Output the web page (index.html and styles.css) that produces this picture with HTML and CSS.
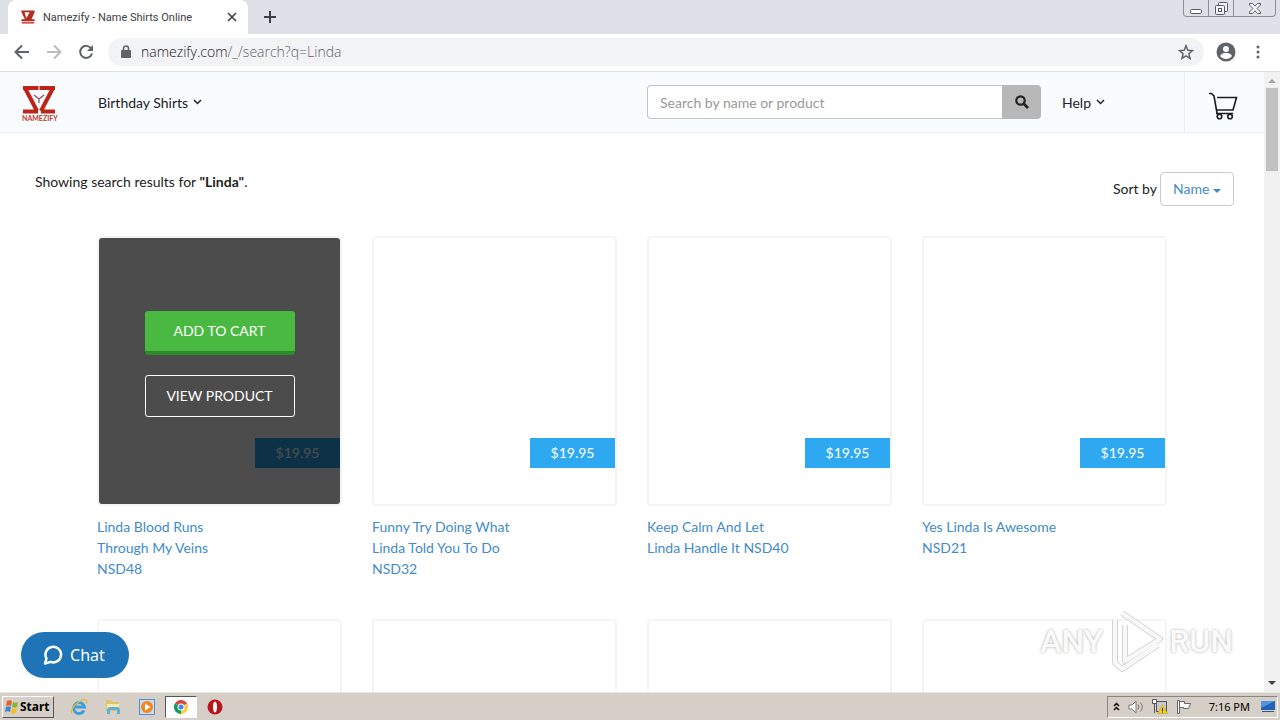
FILE: index.html
```html
<!DOCTYPE html>
<html lang="en">
<head>
  <meta charset="UTF-8">
  <meta name="viewport" content="width=device-width, initial-scale=1.0">
  <title>Namezify - Name Shirts Online</title>
  <link rel="stylesheet" href="styles.css">
</head>
<body>
  <div class="tab-bar">
    <div class="tab">
      <svg class="favicon" viewBox="0 0 36 36" width="14" height="14">
        <path d="M1 1h34v5L27 24h8v5H1v-5h9L1 5z" fill="#b92a1f"/>
        <path d="M9 6h13l-8 15z" fill="#fff"/>
        <path d="M2 33h32" stroke="#d0453a" stroke-width="4"/>
      </svg>
      <span class="tab-title">Namezify - Name Shirts Online</span>
      <button class="icon-btn" aria-label="Close tab">
        <svg width="10" height="10" viewBox="0 0 10 10"><path d="M1 1l8 8M9 1L1 9" stroke="#3c4043" stroke-width="1.600"/></svg>
      </button>
    </div>
    <button class="icon-btn new-tab" aria-label="New tab">
      <svg width="12" height="12" viewBox="0 0 12 12"><path d="M6 0v12M0 6h12" stroke="#3c4043" stroke-width="2"/></svg>
    </button>
    <div class="window-controls">
      <button aria-label="Minimize">
        <svg width="12" height="12" viewBox="0 0 12 12"><rect x=".5" y="7.500" width="11" height="4" rx="1" fill="#fff" stroke="#555b66"/></svg>
      </button>
      <button aria-label="Restore">
        <svg width="13" height="13" viewBox="0 0 13 13" fill="#f4f5f7" stroke="#555b66"><rect x="3.500" y=".5" width="9" height="9" rx="1"/><rect x=".5" y="3.500" width="9" height="9" rx="1"/><rect x="3.500" y="6.500" width="3" height="3"/></svg>
      </button>
      <button class="close" aria-label="Close">
        <svg width="12" height="11" viewBox="0 0 12 11"><path d="M.5.5h3L6 3.200 8.500.5h3v1.500L8 5.500l3.500 3.500v1.500h-3L6 7.800 3.500 10.500h-3V9L4 5.500.5 2z" fill="#fff" stroke="#555b66"/></svg>
      </button>
    </div>
  </div>

  <div class="toolbar">
    <button class="icon-btn" aria-label="Back">
      <svg width="16" height="16" viewBox="0 0 16 16" fill="none" stroke="#5f6368" stroke-width="2"><path d="M15 8H2M8 1.500L1.500 8 8 14.500"/></svg>
    </button>
    <button class="icon-btn" aria-label="Forward">
      <svg width="16" height="16" viewBox="0 0 16 16" fill="none" stroke="#babcbe" stroke-width="2"><path d="M1 8h13M8 1.500L14.500 8 8 14.500"/></svg>
    </button>
    <button class="icon-btn" aria-label="Reload">
      <svg width="16" height="16" viewBox="0 0 16 16"><path d="M13.200 4.500A6 6 0 1 0 14 9.500" fill="none" stroke="#5f6368" stroke-width="2"/><path d="M15 1v6H9z" fill="#5f6368"/></svg>
    </button>
    <div class="address">
      <svg width="10" height="13" viewBox="0 0 10 13"><path d="M2.500 5V3.500a2.500 2.500 0 0 1 5 0V5" fill="none" stroke="#5f6368" stroke-width="1.500"/><rect y="5" width="10" height="8" rx="1" fill="#5f6368"/></svg>
      <span class="url"><b>namezify.com</b>/_/search?q=Linda</span>
      <button class="icon-btn" aria-label="Bookmark">
        <svg width="16" height="16" viewBox="0 0 16 16"><path d="M8 1.800l1.800 4.400 4.700.4-3.600 3.100 1.100 4.600L8 11.800l-4 2.500 1.100-4.600L1.500 6.600l4.700-.4z" fill="none" stroke="#5f6368" stroke-width="1.500"/></svg>
      </button>
    </div>
    <button class="icon-btn profile" aria-label="Profile">
      <svg width="20" height="20" viewBox="0 0 20 20"><circle cx="10" cy="10" r="9.500" fill="#5f6368"/><circle cx="10" cy="7" r="3" fill="#fff"/><path d="M4 14c1-2.500 4-3 6-3s5 .5 6 3c-1.500 2-3.500 3-6 3s-4.500-1-6-3z" fill="#fff"/></svg>
    </button>
    <button class="icon-btn menu" aria-label="Menu">
      <svg width="4" height="14" viewBox="0 0 4 14" fill="#5f6368"><circle cx="2" cy="2" r="1.500"/><circle cx="2" cy="7" r="1.500"/><circle cx="2" cy="12" r="1.500"/></svg>
    </button>
  </div>

  <div class="viewport">
    <div class="page">
      <header class="site-header">
        <a class="logo" href="#" aria-label="Namezify">
          <svg width="34" height="28" viewBox="0 0 34 28">
            <path d="M1 2h32M1 25.500h15M19 25.500h14" stroke="#bd2418" stroke-width="4"/>
            <path d="M3 2l12 23M31 2L19 25" stroke="#bd2418" stroke-width="4"/>
            <path d="M12 9l5 4 5-4M17 13v4" fill="none" stroke="#8d4a5c" stroke-width="1.200"/>
            <path d="M17 0v4" stroke="#fff" stroke-width="1"/>
          </svg>
          <span>NAMEZIFY</span>
        </a>
        <a class="nav-link" href="#">Birthday Shirts
          <svg width="9" height="6" viewBox="0 0 9 6"><path d="M1 1l3.500 3.500L8 1" fill="none" stroke="#222" stroke-width="1.500"/></svg>
        </a>
        <form class="search">
          <input type="text" placeholder="Search by name or product" aria-label="Search by name or product">
          <button type="submit" aria-label="Search">
            <svg width="14" height="14" viewBox="0 0 14 14" fill="none" stroke="#222"><circle cx="5.500" cy="5.500" r="4.200" stroke-width="2.200"/><path d="M8.500 8.500L13 13" stroke-width="2.600"/></svg>
          </button>
        </form>
        <a class="nav-link help" href="#">Help
          <svg width="9" height="6" viewBox="0 0 9 6"><path d="M1 1l3.500 3.500L8 1" fill="none" stroke="#222" stroke-width="1.500"/></svg>
        </a>
        <a class="cart" href="#" aria-label="Cart">
          <svg width="30" height="28" viewBox="0 0 30 28" fill="none" stroke="#1c1c1c" stroke-width="1.600">
            <path d="M1 1.500h2.500L6 4l3 17M9 5.500h19.500L25 18H9M8 21.500h17"/><circle cx="11.500" cy="24.500" r="2.300"/><circle cx="22" cy="24.500" r="2.300"/>
          </svg>
        </a>
      </header>

      <div class="results-bar">
        <p>Showing search results for <b>"Linda"</b>.</p>
        <div class="sort">
          <label for="sort">Sort by</label>
          <div class="sort-select">
            <select id="sort">
              <option>Name</option>
              <option>Price</option>
            </select>
            <span class="caret"></span>
          </div>
        </div>
      </div>

      <main class="products">
        <div class="product">
          <div class="thumb">
            <span class="price">$19.95</span>
            <div class="overlay">
              <button class="add">ADD TO CART</button>
              <button class="view">VIEW PRODUCT</button>
            </div>
          </div>
          <a class="name" href="#">Linda Blood Runs Through My Veins NSD48</a>
        </div>
        <div class="product">
          <div class="thumb"><span class="price">$19.95</span></div>
          <a class="name" href="#">Funny Try Doing What Linda Told You To Do NSD32</a>
        </div>
        <div class="product">
          <div class="thumb"><span class="price">$19.95</span></div>
          <a class="name" href="#">Keep Calm And Let Linda Handle It NSD40</a>
        </div>
        <div class="product">
          <div class="thumb"><span class="price">$19.95</span></div>
          <a class="name" href="#">Yes Linda Is Awesome NSD21</a>
        </div>
        <div class="product"><div class="thumb"></div></div>
        <div class="product"><div class="thumb"></div></div>
        <div class="product"><div class="thumb"></div></div>
        <div class="product"><div class="thumb"></div></div>
      </main>
    </div>

    <div class="scrollbar">
      <span class="arrow up"></span>
      <span class="thumb-bar"></span>
      <span class="arrow down"></span>
    </div>

    <button class="chat">
      <svg width="20" height="20" viewBox="0 0 20 20"><path d="M3.500 13.500A7.800 7.800 0 1 1 7.500 16.900L2 18.500z" fill="none" stroke="#fff" stroke-width="2.500" stroke-linejoin="round"/></svg>
      Chat
    </button>

    <div class="watermark">
      <span>ANY</span>
      <svg width="58" height="64" viewBox="0 0 58 64" fill="none" stroke-linejoin="round">
        <path d="M15 4l38 26-35 22V16M8 10v44l7 6 36-24" stroke="#d6d6d6" stroke-width="6"/>
        <path d="M15 4l38 26-35 22V16M8 10v44l7 6 36-24" stroke="#f8f8f8" stroke-width="4"/>
      </svg>
      <span>RUN</span>
    </div>
  </div>

  <div class="taskbar">
    <button class="start">
      <svg width="16" height="16" viewBox="0 0 16 16">
        <path d="M3 2c2-1 3-1 5 0L7 7C5 6 4 6 2 7z" fill="#e8602c"/>
        <path d="M9 3c2 1 3 1 5 0l-1 5c-2 1-3 1-5 0z" fill="#7db83a"/>
        <path d="M2 8c2-1 3-1 5 0l-1 5c-2-1-3-1-5 0z" fill="#3f86d8"/>
        <path d="M8 9c2 1 3 1 5 0l-1 5c-2 1-3 1-5 0z" fill="#f6c02c"/>
      </svg>
      Start
    </button>
    <button class="task" aria-label="Internet Explorer">
      <svg width="18" height="18" viewBox="0 0 18 18" fill="none"><path d="M14 12.500A5.500 5.500 0 1 1 14.500 9H5" stroke="#3aa0dc" stroke-width="2.800"/><path d="M2 15C-1 11 11 0 16 2c1 .5 1 2 0 3.500" stroke="#e4b93c" stroke-width="1.300"/></svg>
    </button>
    <button class="task" aria-label="Explorer">
      <svg width="18" height="18" viewBox="0 0 18 18"><path d="M2 2h5l1 2h7v9H2z" fill="#dfc469"/><path d="M3 6h12v5H3z" fill="#f7e9ac"/><path d="M3 16v-5l2-2h9l2 2v5h-3v-4H6v4z" fill="#5fb0dc"/></svg>
    </button>
    <button class="task" aria-label="Media Player">
      <svg width="16" height="16" viewBox="0 0 16 16"><rect x=".5" y=".5" width="15" height="15" fill="#c5dcf2" stroke="#5b8fc7"/><circle cx="8" cy="8" r="6" fill="#f08a1c"/><path d="M6 4.500L11.500 8 6 11.500z" fill="#fff"/></svg>
    </button>
    <button class="task active" aria-label="Chrome">
      <svg width="16" height="16" viewBox="0 0 16 16"><path d="M8 8L1.900 4.500A7 7 0 0 1 14.100 4.500z" fill="#db4437"/><path d="M8 8L1.900 4.500A7 7 0 0 0 8 15z" fill="#0f9d58"/><path d="M8 8l6.100-3.500A7 7 0 0 1 8 15z" fill="#ffcd40"/><circle cx="8" cy="8" r="3.500" fill="#fff"/><circle cx="8" cy="8" r="2.500" fill="#4285f4"/></svg>
    </button>
    <button class="task" aria-label="Opera">
      <svg width="16" height="16" viewBox="0 0 16 16"><circle cx="8" cy="8" r="7.500" fill="#b8161b"/><ellipse cx="8" cy="8" rx="2" ry="5.500" fill="#fff"/></svg>
    </button>
    <div class="tray">
      <svg width="7" height="9" viewBox="0 0 7 9" fill="none" stroke="#000" stroke-width="1.500"><path d="M1 4l2.500-2.500L6 4M1 8l2.500-2.500L6 8"/></svg>
      <svg width="16" height="14" viewBox="0 0 16 14"><path d="M1 5h3l4-4v12L4 9H1z" fill="#fff" stroke="#777"/><path d="M10 4.500q2 2.500 0 5M12.500 2.500q3.500 4.500 0 9" fill="none" stroke="#777"/></svg>
      <svg width="16" height="15" viewBox="0 0 16 15"><rect x="4.500" y="2.500" width="10" height="10" fill="#c9c9c9" stroke="#555"/><path d="M.5.500h4v4h-4zM2.500 5v9" fill="#fff" stroke="#555"/><path d="M10.500 6l5 8.500h-10z" fill="#f7d11e" stroke="#b8930a" stroke-width=".5"/><path d="M10.500 9v3M10.500 12.600v1" stroke="#222"/></svg>
      <svg width="16" height="14" viewBox="0 0 16 14" fill="#fff" stroke="#666"><path d="M3.500 1.500h5v2h6l-2 5h-5v-1h-4z"/><path d="M1.500.500h2v13h-2z"/></svg>
      <time>7:16 PM</time>
      <svg width="16" height="14" viewBox="0 0 16 14"><path d="M1 1h14v9H1z" fill="#2463b4"/><path d="M1 1h14L1 8z" fill="#4f94dd"/><path d="M2 11.500h12" stroke="#36598c"/></svg>
    </div>
  </div>
</body>
</html>
```
FILE: styles.css
```css
* {
  box-sizing: border-box;
}
body {
  margin: 0;
  height: 100vh;
  display: flex;
  flex-direction: column;
  overflow: hidden;
  background: #fff;
  color: #222;
  font-family: Lato, sans-serif;
  font-size: 14px;
}
button {
  font-family: inherit;
  cursor: pointer;
}
a {
  text-decoration: none;
}
svg {
  display: block;
  flex: none;
}

/* browser chrome */
.tab-bar {
  display: flex;
  align-items: center;
  height: 34px;
  flex: none;
  background: #dee1e8;
  padding-left: 8px;
}
.tab {
  display: flex;
  align-items: center;
  width: 240px;
  height: 34px;
  padding: 0 10px 0 13px;
  background: #fff;
  border-radius: 8px 8px 0 0;
}
.tab-title {
  flex: 1;
  margin-left: 8px;
  font-family: Roboto, sans-serif;
  font-size: 11px;
  color: #3c4043;
  white-space: nowrap;
}
.icon-btn {
  display: flex;
  align-items: center;
  justify-content: center;
  padding: 0;
  border: none;
  background: none;
}
.tab .icon-btn {
  width: 12px;
}
.new-tab {
  margin-left: 16px;
}
.window-controls {
  display: flex;
  align-self: flex-start;
  height: 17px;
  margin-left: auto;
  margin-right: 4px;
  border: 1px solid #8b909c;
  border-top: none;
  border-radius: 0 0 4px 4px;
}
.window-controls button {
  display: flex;
  align-items: center;
  justify-content: center;
  width: 25px;
  padding: 0;
  border: none;
  border-right: 1px solid #8b909c;
  background: none;
}
.window-controls .close {
  width: 41px;
  border-right: none;
}
.toolbar {
  display: flex;
  align-items: center;
  flex: none;
  height: 38px;
  padding: 0 20px 2px 14px;
  gap: 16px;
  background: #fff;
  border-bottom: 1px solid #dcdee0;
}
.address {
  display: flex;
  align-items: center;
  flex: 1;
  height: 28px;
  margin-left: -2px;
  padding: 0 10px 0 13px;
  border-radius: 14px;
  background: #f1f3f4;
}
.url {
  flex: 1;
  margin-left: 10px;
  font-family: "Open Sans", sans-serif;
  font-size: 14px;
  font-weight: 300;
  color: #5f6368;
}
.url b {
  font-weight: 300;
  color: #202124;
}
.profile {
  margin-left: -4px;
}
.menu {
  margin-left: 4px;
}

/* page */
.viewport {
  position: relative;
  display: flex;
  flex: 1;
  min-height: 0;
}
.page {
  flex: 1;
  overflow: hidden;
}
.site-header {
  display: flex;
  align-items: center;
  height: 61px;
  padding-left: 22px;
  background: #f9fcff;
  border-bottom: 1px solid #eceff1;
}
.logo {
  width: 36px;
  margin-right: 40px;
  margin-top: 4px;
  color: #c0392b;
}
.logo span {
  display: block;
  font-size: 7px;
  font-weight: 700;
  line-height: 8px;
}
.nav-link {
  display: flex;
  align-items: center;
  gap: 5px;
  color: #222;
}
.search {
  display: flex;
  width: 394px;
  height: 34px;
  margin-left: auto;
}
.search input {
  flex: 1;
  min-width: 0;
  padding: 0 12px;
  border: 1px solid #c4c4c4;
  border-right: none;
  border-radius: 4px 0 0 4px;
  font-family: inherit;
  font-size: 14px;
}
.search input::placeholder {
  color: #999;
}
.search button {
  display: flex;
  align-items: center;
  justify-content: center;
  width: 39px;
  padding: 0;
  border: none;
  border-radius: 0 4px 4px 0;
  background: #b8b8b8;
}
.help {
  width: 122px;
  margin-left: 21px;
}
.cart {
  display: flex;
  align-items: center;
  justify-content: center;
  width: 80px;
  height: 60px;
  padding: 8px 4px 0 0;
  border-left: 1px solid #eceff1;
}
.results-bar {
  display: flex;
  justify-content: space-between;
  padding: 39px 30px 0 35px;
}
.results-bar p {
  margin: 0;
  line-height: 20px;
}
.sort {
  display: flex;
  align-items: center;
  gap: 3px;
}
.sort-select {
  position: relative;
}
.sort label {
  padding-bottom: 2px;
}
.sort select {
  appearance: none;
  width: 74px;
  height: 34px;
  padding: 0 12px 2px;
  border: 1px solid #ccc;
  border-radius: 4px;
  background: #fff;
  color: #428bca;
  font-family: inherit;
  font-size: 14px;
}
.caret {
  position: absolute;
  right: 13px;
  top: 17px;
  border: 4px solid transparent;
  border-top-color: #428bca;
  border-bottom: none;
  pointer-events: none;
}
.products {
  display: grid;
  grid-template-columns: repeat(4, 1fr);
  gap: 40px 30px;
  padding: 30px 97px;
}
.thumb {
  position: relative;
  height: 270px;
  border: 2px solid #f4f4f4;
  border-radius: 4px;
}
.price {
  position: absolute;
  right: 0;
  bottom: 36px;
  width: 85px;
  background: #2ea8f0;
  color: #fff;
  line-height: 30px;
  text-align: center;
}
.overlay {
  position: absolute;
  inset: 0;
  display: flex;
  flex-direction: column;
  align-items: center;
  justify-content: center;
  gap: 20px;
  padding-bottom: 14px;
  border-radius: 3px;
  background: rgba(0, 0, 0, 0.7);
}
.overlay button {
  width: 150px;
  height: 42px;
  padding: 0 0 2px;
  border-radius: 3px;
  color: #fff;
  font-size: 14px;
}
.overlay .add {
  height: 44px;
  border: none;
  border-bottom: 4px solid #2f8a29;
  background: #4ab942;
}
.overlay .view {
  border: 1px solid #fff;
  background: none;
}
.name {
  display: block;
  max-width: 150px;
  margin-top: 10px;
  color: #428bca;
  line-height: 21px;
}
.scrollbar {
  display: flex;
  flex-direction: column;
  align-items: center;
  width: 16px;
  padding: 7px 0;
  background: #f1f1f1;
}
.arrow {
  border: 4px solid transparent;
}
.up {
  border-top: none;
  border-bottom-color: #a3a3a3;
}
.down {
  margin-top: auto;
  border-bottom: none;
  border-top-color: #404040;
}
.thumb-bar {
  width: 12px;
  height: 83px;
  margin-top: 5px;
  background: #c1c1c1;
}
.chat {
  position: absolute;
  left: 21px;
  bottom: 14px;
  display: flex;
  align-items: center;
  justify-content: center;
  gap: 7px;
  width: 108px;
  height: 46px;
  padding: 0 8px 0 6px;
  border: none;
  border-radius: 23px;
  background: #1f73b7;
  color: #fff;
  font-family: "Noto Sans", sans-serif;
  font-size: 16px;
}
.watermark {
  position: absolute;
  right: 47px;
  bottom: 19px;
  display: flex;
  align-items: center;
  gap: 4px;
  color: #fafafa;
  font-family: Roboto, sans-serif;
  font-size: 32px;
  font-weight: 500;
  text-shadow: 0 0 3px #aaa;
}

/* taskbar */
.taskbar {
  display: flex;
  align-items: center;
  flex: none;
  height: 28px;
  padding: 0 2px;
  background: #d6cfc7;
  border-top: 1px solid #e9e5df;
  font-family: "Noto Sans", sans-serif;
  font-size: 11px;
}
.start {
  display: flex;
  align-items: center;
  width: 52px;
  height: 22px;
  margin-right: 9px;
  padding: 0 1px;
  border: 1px solid;
  border-color: #fff #555 #555 #fff;
  background: #d6cfc7;
  font-size: 12px;
  font-weight: 700;
}
.task {
  display: flex;
  align-items: center;
  justify-content: center;
  width: 32px;
  height: 22px;
  margin-right: 2px;
  padding: 0;
  border: 1px solid transparent;
  background: none;
}
.task.active {
  border-color: #555 #fff #fff #555;
  background: #fff;
}
.tray {
  display: flex;
  align-items: center;
  gap: 8px;
  height: 22px;
  margin-left: auto;
  padding: 0 1px 0 5px;
  border: 1px solid;
  border-color: #8a857e #fff #fff #8a857e;
  color: #000;
}
.tray time {
  margin: 0 2px 0 9px;
}
```
